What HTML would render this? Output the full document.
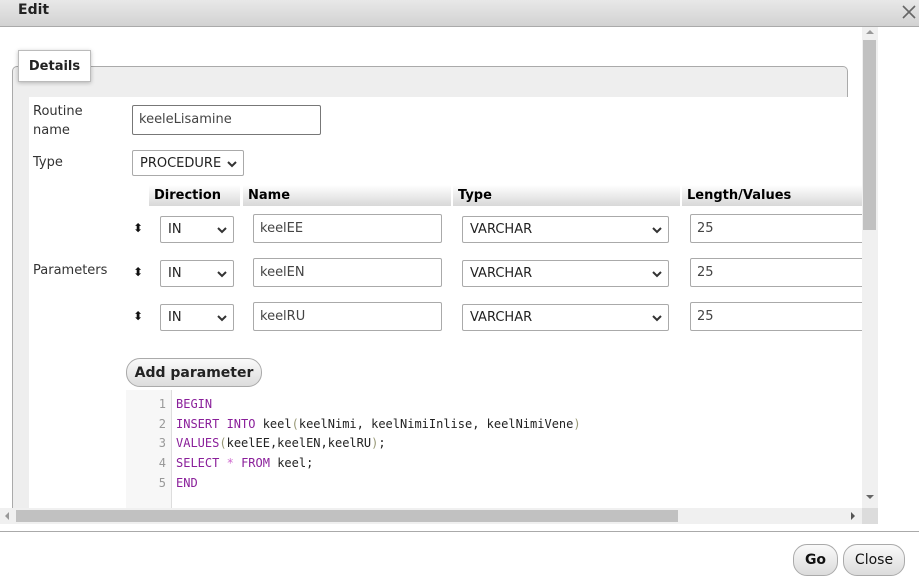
<!DOCTYPE html>
<html><head><style>
*{box-sizing:border-box}
body{margin:0;width:919px;height:586px;overflow:hidden;background:#fff;font-family:"DejaVu Sans",Verdana,sans-serif;font-size:13px;color:#333;position:relative}
.abs{position:absolute}
.title{left:0;top:0;width:919px;height:27px;background:linear-gradient(#e8e8e8,#d2d2d2);border-bottom:1px solid #aaa}
.title b{position:absolute;left:18px;top:2px;font-size:14px;color:#222}
.inp{border:1px solid #aaa;border-radius:2px;background:#fff;font-size:13px;color:#444;padding-left:6px;line-height:28px}
.sel{border:1px solid #aaa;border-radius:2px;background:#fff;font-size:13px;color:#222;padding-left:7px;line-height:26px}
.sel svg{position:absolute;right:6px;top:10px}
.th{top:185px;height:21px;background:linear-gradient(#fff,#d8d8d8);font-weight:bold;color:#000;font-size:13px;padding-left:5px;line-height:22px}
.code{font-family:"DejaVu Sans Mono",monospace;font-size:12px;line-height:19.7px}
.k{color:#8a1f9a}
.btn{border:1px solid #aaa;border-radius:14px;background:linear-gradient(#fafafa,#dcdcdc);font-size:14px;text-align:center;line-height:30px;color:#111}
</style></head><body>
<div class="abs title"><b>Edit</b>
<svg class="abs" style="left:901px;top:4px" width="16" height="16"><path d="M2 2L14 14M14 2L2 14" stroke="#666" stroke-width="1.6"/></svg></div>

<div class="abs" style="left:12px;top:66px;width:836px;height:444px;border:1px solid #aaa;border-bottom:none;border-radius:5px 5px 0 0;background:#eee"></div>
<div class="abs" style="left:29px;top:97px;width:833px;height:413px;background:#fff"></div>
<div class="abs" style="left:18px;top:50px;width:73px;height:32px;border:1px solid #bbb;background:#fff;box-shadow:0 1px 4px rgba(0,0,0,.25);font-weight:bold;color:#222;font-size:13px;line-height:31px;text-align:center">Details</div>

<div class="abs" style="left:33px;top:102px;line-height:19px">Routine<br>name</div>
<div class="abs inp" style="left:132px;top:105px;width:189px;height:30px;border-color:#777">keeleLisamine</div>
<div class="abs" style="left:33px;top:155px">Type</div>
<div class="abs sel" style="left:132px;top:150px;width:112px;height:26px;line-height:25px">PROCEDURE<svg width="10" height="7"><path d="M1 1L5 5L9 1" stroke="#333" stroke-width="2" fill="none"/></svg></div>
<div class="abs" style="left:33px;top:263px">Parameters</div>

<div class="abs th" style="left:149px;width:91px">Direction</div>
<div class="abs th" style="left:243px;width:208px">Name</div>
<div class="abs th" style="left:453px;width:227px">Type</div>
<div class="abs th" style="left:682px;width:180px">Length/Values</div>

<div class="abs" style="left:133px;top:221px;font-size:12px;color:#111">⬍</div>
<div class="abs sel" style="left:160px;top:216px;width:74px;height:27px">IN<svg width="10" height="7"><path d="M1 1L5 5L9 1" stroke="#333" stroke-width="2" fill="none"/></svg></div>
<div class="abs inp" style="left:253px;top:214px;width:189px;height:29px">keelEE</div>
<div class="abs sel" style="left:462px;top:216px;width:207px;height:27px">VARCHAR<svg width="10" height="7"><path d="M1 1L5 5L9 1" stroke="#333" stroke-width="2" fill="none"/></svg></div>
<div class="abs inp" style="left:690px;top:214px;width:180px;height:29px">25</div>

<div class="abs" style="left:133px;top:265px;font-size:12px;color:#111">⬍</div>
<div class="abs sel" style="left:160px;top:260px;width:74px;height:27px">IN<svg width="10" height="7"><path d="M1 1L5 5L9 1" stroke="#333" stroke-width="2" fill="none"/></svg></div>
<div class="abs inp" style="left:253px;top:258px;width:189px;height:29px">keelEN</div>
<div class="abs sel" style="left:462px;top:260px;width:207px;height:27px">VARCHAR<svg width="10" height="7"><path d="M1 1L5 5L9 1" stroke="#333" stroke-width="2" fill="none"/></svg></div>
<div class="abs inp" style="left:690px;top:258px;width:180px;height:29px">25</div>

<div class="abs" style="left:133px;top:309px;font-size:12px;color:#111">⬍</div>
<div class="abs sel" style="left:160px;top:304px;width:74px;height:27px">IN<svg width="10" height="7"><path d="M1 1L5 5L9 1" stroke="#333" stroke-width="2" fill="none"/></svg></div>
<div class="abs inp" style="left:253px;top:302px;width:189px;height:29px">keelRU</div>
<div class="abs sel" style="left:462px;top:304px;width:207px;height:27px">VARCHAR<svg width="10" height="7"><path d="M1 1L5 5L9 1" stroke="#333" stroke-width="2" fill="none"/></svg></div>
<div class="abs inp" style="left:690px;top:302px;width:180px;height:29px">25</div>

<div class="abs btn" style="left:126px;top:358px;width:136px;height:29px;line-height:28px;font-weight:bold;color:#222">Add parameter</div>

<div class="abs" style="left:126px;top:390px;width:736px;height:118px;background:#fff"></div>
<div class="abs code" style="left:126px;top:390px;width:46px;height:118px;background:#f7f7f7;border-right:1px solid #ddd;color:#999;text-align:right;padding:5px 5px 0 0">1<br>2<br>3<br>4<br>5</div>
<div class="abs code" style="left:176px;top:395px;color:#222;white-space:pre"><span class="k">BEGIN</span>
<span class="k">INSERT INTO</span> keel<span style="color:#997">(</span>keelNimi, keelNimiInlise, keelNimiVene<span style="color:#997">)</span>
<span class="k">VALUES</span><span style="color:#997">(</span>keelEE,keelEN,keelRU<span style="color:#997">)</span>;
<span class="k">SELECT</span> <span style="color:#c6c">*</span> <span class="k">FROM</span> keel;
<span class="k">END</span></div>

<div class="abs" style="left:862px;top:27px;width:16px;height:497px;background:#f0f0f0"></div>
<div class="abs" style="left:863px;top:40px;width:13px;height:190px;background:#c1c1c1"></div>
<div class="abs" style="left:866px;top:30px;width:0;height:0;border:4px solid transparent;border-bottom:4px solid #999;border-top:0"></div>
<div class="abs" style="left:866px;top:495px;width:0;height:0;border:4px solid transparent;border-top:4px solid #666;border-bottom:0"></div>
<div class="abs" style="left:0;top:508px;width:862px;height:16px;background:#f0f0f0"></div>
<div class="abs" style="left:16px;top:510px;width:662px;height:12px;background:#c1c1c1"></div>
<div class="abs" style="left:5px;top:512px;border:4px solid transparent;border-right:4px solid #999;border-left:0"></div>
<div class="abs" style="left:851px;top:512px;border:4px solid transparent;border-left:4px solid #555;border-right:0"></div>
<div class="abs" style="left:862px;top:508px;width:16px;height:16px;background:#dcdcdc"></div>

<div class="abs" style="left:0;top:531px;width:919px;height:1px;background:#aaa"></div>
<div class="abs btn" style="left:793px;top:544px;width:45px;height:32px;font-weight:bold">Go</div>
<div class="abs btn" style="left:843px;top:544px;width:62px;height:32px">Close</div>
</body></html>
